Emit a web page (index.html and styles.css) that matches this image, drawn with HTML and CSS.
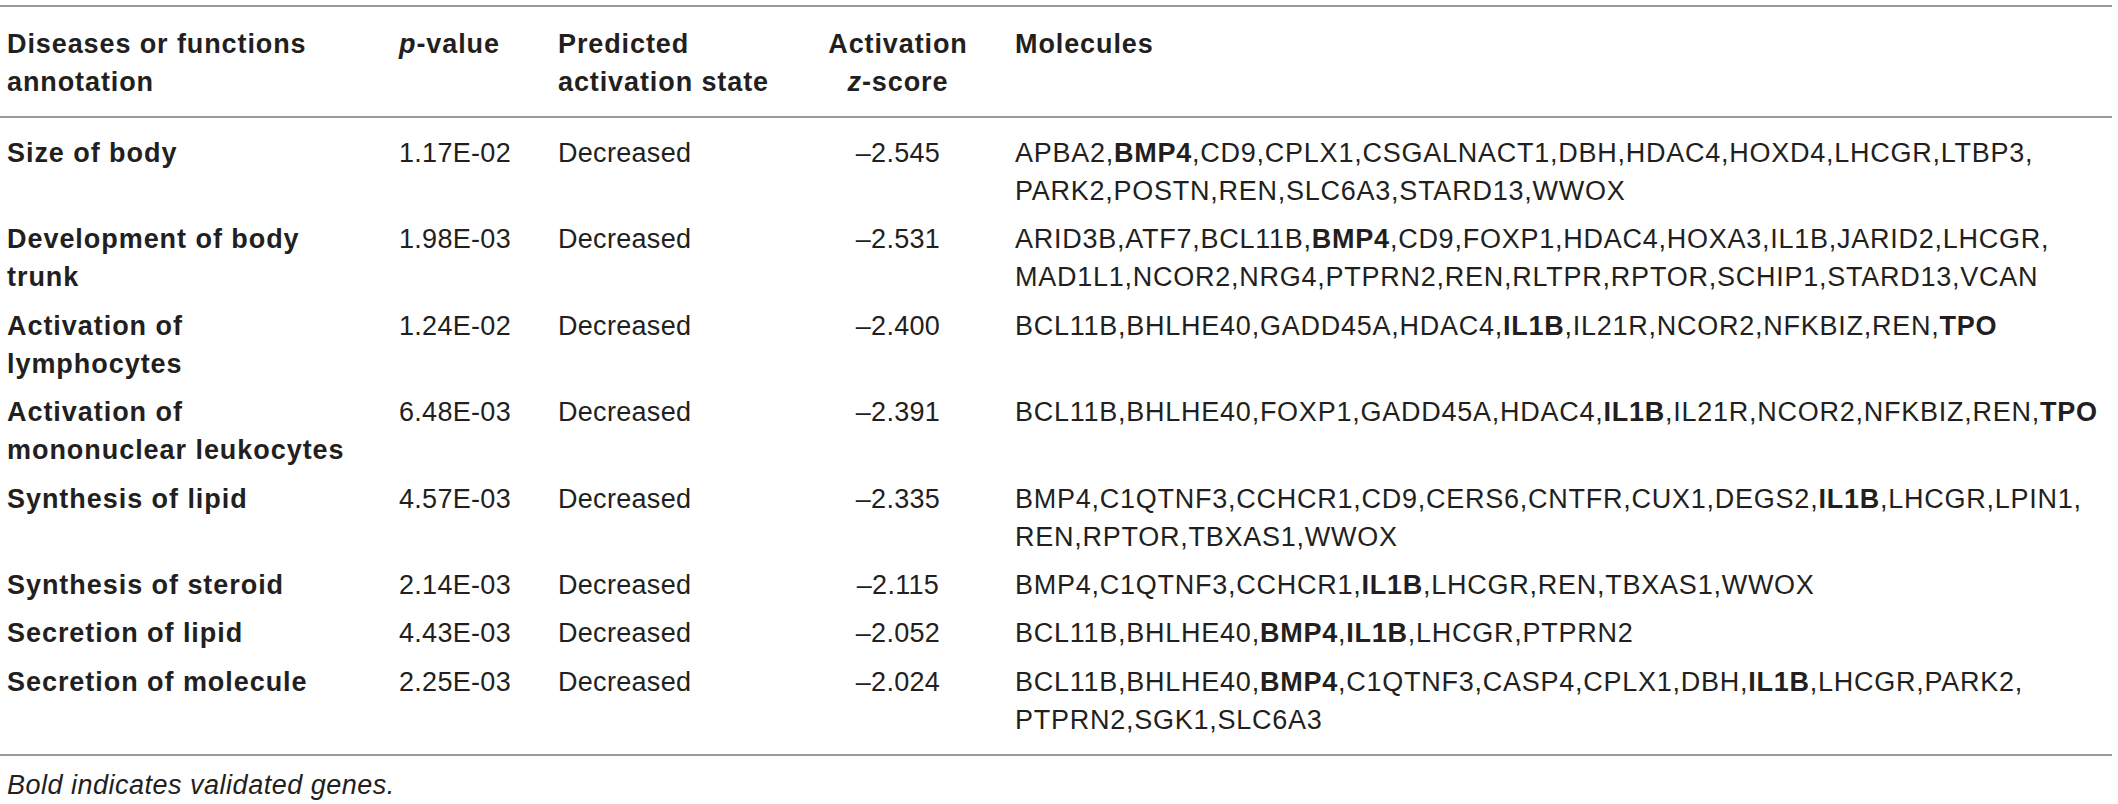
FILE: index.html
```html
<!DOCTYPE html>
<html lang="en">
<head>
<meta charset="utf-8">
<title>Diseases or functions annotation</title>
<link rel="stylesheet" href="styles.css">
</head>
<body>
<div class="page">
  <table class="data">
    <colgroup>
      <col class="c-name">
      <col class="c-p">
      <col class="c-state">
      <col class="c-z">
      <col class="c-mol">
    </colgroup>
    <thead>
      <tr>
        <th class="name">Diseases or functions<br>annotation</th>
        <th class="p"><i>p</i>-value</th>
        <th class="state">Predicted<br>activation state</th>
        <th class="z">Activation<br><i>z</i>-score</th>
        <th class="mol">Molecules</th>
      </tr>
    </thead>
    <tbody>
      <tr>
        <td class="name">Size of body</td>
        <td class="p">1.17E-02</td>
        <td class="state">Decreased</td>
        <td class="z">–2.545</td>
        <td class="mol">APBA2,<b>BMP4</b>,CD9,CPLX1,CSGALNACT1,DBH,HDAC4,HOXD4,LHCGR,LTBP3,<br>PARK2,POSTN,REN,SLC6A3,STARD13,WWOX</td>
      </tr>
      <tr>
        <td class="name">Development of body<br>trunk</td>
        <td class="p">1.98E-03</td>
        <td class="state">Decreased</td>
        <td class="z">–2.531</td>
        <td class="mol">ARID3B,ATF7,BCL11B,<b>BMP4</b>,CD9,FOXP1,HDAC4,HOXA3,IL1B,JARID2,LHCGR,<br>MAD1L1,NCOR2,NRG4,PTPRN2,REN,RLTPR,RPTOR,SCHIP1,STARD13,VCAN</td>
      </tr>
      <tr>
        <td class="name">Activation of<br>lymphocytes</td>
        <td class="p">1.24E-02</td>
        <td class="state">Decreased</td>
        <td class="z">–2.400</td>
        <td class="mol">BCL11B,BHLHE40,GADD45A,HDAC4,<b>IL1B</b>,IL21R,NCOR2,NFKBIZ,REN,<b>TPO</b></td>
      </tr>
      <tr>
        <td class="name">Activation of<br>mononuclear leukocytes</td>
        <td class="p">6.48E-03</td>
        <td class="state">Decreased</td>
        <td class="z">–2.391</td>
        <td class="mol">BCL11B,BHLHE40,FOXP1,GADD45A,HDAC4,<b>IL1B</b>,IL21R,NCOR2,NFKBIZ,REN,<b>TPO</b></td>
      </tr>
      <tr>
        <td class="name">Synthesis of lipid</td>
        <td class="p">4.57E-03</td>
        <td class="state">Decreased</td>
        <td class="z">–2.335</td>
        <td class="mol">BMP4,C1QTNF3,CCHCR1,CD9,CERS6,CNTFR,CUX1,DEGS2,<b>IL1B</b>,LHCGR,LPIN1,<br>REN,RPTOR,TBXAS1,WWOX</td>
      </tr>
      <tr>
        <td class="name">Synthesis of steroid</td>
        <td class="p">2.14E-03</td>
        <td class="state">Decreased</td>
        <td class="z">–2.115</td>
        <td class="mol">BMP4,C1QTNF3,CCHCR1,<b>IL1B</b>,LHCGR,REN,TBXAS1,WWOX</td>
      </tr>
      <tr>
        <td class="name">Secretion of lipid</td>
        <td class="p">4.43E-03</td>
        <td class="state">Decreased</td>
        <td class="z">–2.052</td>
        <td class="mol">BCL11B,BHLHE40,<b>BMP4</b>,<b>IL1B</b>,LHCGR,PTPRN2</td>
      </tr>
      <tr>
        <td class="name">Secretion of molecule</td>
        <td class="p">2.25E-03</td>
        <td class="state">Decreased</td>
        <td class="z">–2.024</td>
        <td class="mol">BCL11B,BHLHE40,<b>BMP4</b>,C1QTNF3,CASP4,CPLX1,DBH,<b>IL1B</b>,LHCGR,PARK2,<br>PTPRN2,SGK1,SLC6A3</td>
      </tr>
    </tbody>
  </table>
  <p class="note">Bold indicates validated genes.</p>
</div>
</body>
</html>
```
FILE: styles.css
```css
html, body {
  margin: 0;
  padding: 0;
  background: #ffffff;
}

body {
  font-family: "Liberation Sans", Arial, sans-serif;
  font-size: 27px;
  line-height: 38px;
  color: #231f20;
  letter-spacing: 0.3px;
}

.page {
  width: 2112px;
  padding-top: 5px;
}

.data {
  width: 2112px;
  table-layout: fixed;
  border-collapse: collapse;
  border-top: 2px solid #9a9a9a;
  border-bottom: 2px solid #9a9a9a;
}

.c-name { width: 399px; }
.c-p { width: 159px; }
.c-state { width: 252px; }
.c-z { width: 176px; }
.c-mol { width: auto; }

.data th,
.data td {
  padding: 5px 0 5.4px;
  vertical-align: top;
  text-align: left;
  white-space: nowrap;
}

.data th {
  font-weight: bold;
  letter-spacing: 0.9px;
  padding-top: 18px;
  padding-bottom: 15px;
  border-bottom: 2px solid #9a9a9a;
}

.data td.name {
  font-weight: bold;
  letter-spacing: 0.95px;
}

.data .name { padding-left: 7px; }

.data .z { text-align: center; }

.data td.mol {
  padding-left: 29px;
  letter-spacing: 0.75px;
}

.data th.mol { padding-left: 29px; }

.data b { font-weight: bold; }

.data tbody tr:first-child td { padding-top: 16px; }
.data tbody tr:last-child td { padding-bottom: 15px; }

.note {
  margin: 10px 0 0;
  padding-left: 7px;
  font-style: italic;
  letter-spacing: 0.5px;
}
```
